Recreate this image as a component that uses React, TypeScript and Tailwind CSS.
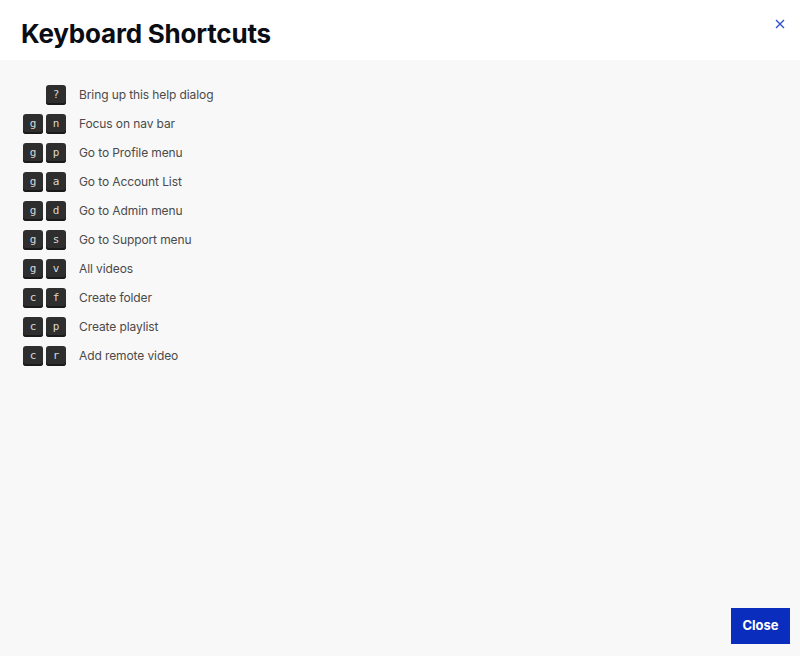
const rows: { keys: string[]; label: string }[] = [
  { keys: ["?"], label: "Bring up this help dialog" },
  { keys: ["g", "n"], label: "Focus on nav bar" },
  { keys: ["g", "p"], label: "Go to Profile menu" },
  { keys: ["g", "a"], label: "Go to Account List" },
  { keys: ["g", "d"], label: "Go to Admin menu" },
  { keys: ["g", "s"], label: "Go to Support menu" },
  { keys: ["g", "v"], label: "All videos" },
  { keys: ["c", "f"], label: "Create folder" },
  { keys: ["c", "p"], label: "Create playlist" },
  { keys: ["c", "r"], label: "Add remote video" },
];

function Key({ k }: { k: string }) {
  return (
    <kbd className="flex h-[20px] w-[20px] items-center justify-center rounded-[3px] bg-[#2e2e2e] pb-[1px] font-['DejaVu_Sans_Mono',monospace] text-[11px] font-light leading-none text-[#d8d8d8] shadow-[inset_0_-2px_0_#1a1a1a]">
      {k}
    </kbd>
  );
}

export default function App() {
  return (
    <div className="flex h-[656px] w-[800px] flex-col bg-[#f8f8f8] font-['Inter',sans-serif]">
      <header className="flex h-[60px] items-start justify-between bg-white">
        <h1 className="pl-[21px] pt-[18px] text-[26px] font-bold leading-[32px] tracking-[-0.2px] text-[#0b0d14]">
          Keyboard Shortcuts
        </h1>
        <button className="mr-[13px] mt-[17px] flex h-[14px] w-[14px] items-center justify-center text-[#2f4fd6]">
          <svg width="10" height="10" viewBox="0 0 10 10" fill="none" stroke="currentColor" strokeWidth="1.4">
            <path d="M1 1l8 8M9 1l-8 8" />
          </svg>
        </button>
      </header>
      <ul className="flex flex-col gap-[9px] pl-[23px] pt-[25px]">
        {rows.map((r) => (
          <li key={r.label} className="flex items-center">
            <div className="flex w-[56px] justify-end gap-[3px] pr-[13px]">
              {r.keys.map((k, i) => (
                <Key key={i} k={k} />
              ))}
            </div>
            <span className="text-[12px] tracking-[-0.1px] text-[#4a4a4a]">{r.label}</span>
          </li>
        ))}
      </ul>
      <div className="mt-auto flex justify-end pb-[12px] pr-[10px]">
        <button className="h-[36px] w-[59px] bg-[#0a2dbd] text-[13px] font-bold text-white">
          Close
        </button>
      </div>
    </div>
  );
}
